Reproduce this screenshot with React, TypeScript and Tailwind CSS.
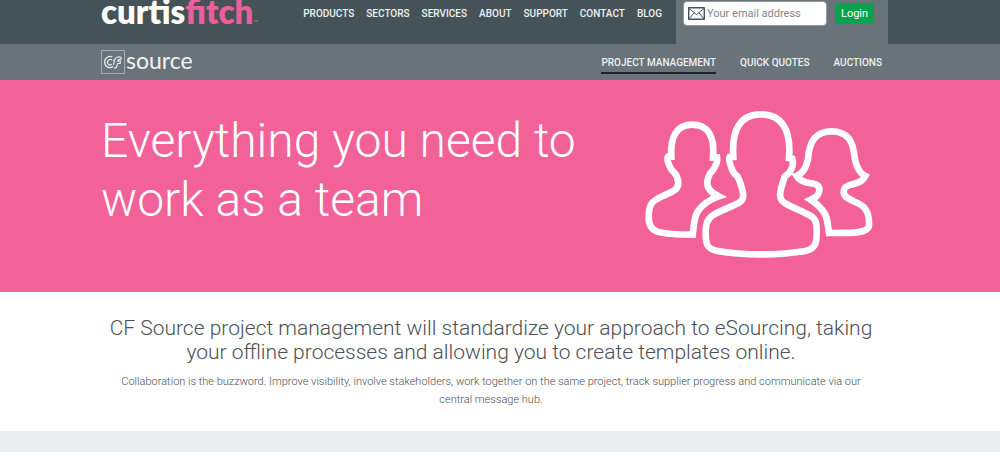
import React from 'react';

const mainLinks = ['Products', 'Sectors', 'Services', 'About', 'Support', 'Contact', 'Blog'];

const sourceLinks = [
  { label: 'Project management', active: true },
  { label: 'Quick quotes', active: false },
  { label: 'Auctions', active: false },
];

const SourceMark = () => (
  <svg viewBox="0 0 24 24" className="h-6 w-6" fill="none" stroke="#e6eaec" aria-hidden="true">
    <rect x="0.5" y="0.5" width="23" height="23" stroke="#a3abaf" />
    <path d="M11.500 7C8 5.500 3.700 7.500 3.700 12.300c0 5 5 6.700 8.500 4.200M11 9.800C9 8.800 6.500 9.800 6.500 12.300s2.500 3.400 4.300 2" strokeWidth="1.300" />
    <path d="M20.300 7.300c-3.500-1.300-6.300 0-6.800 3H12M20.300 7.300l-.6 2.200c-1.700-.4-2.700 0-3 1.700h2.800l-.5 2.300h-2.600l-.6 3c-.3 1.300-1.300 1.700-2.800 1.500M13.500 10.300l-1 4.500" strokeWidth="1.200" strokeLinejoin="round" />
  </svg>
);

const EnvelopeIcon = () => (
  <svg viewBox="0 0 17 13" className="h-[13px] w-[17px] shrink-0" fill="none" stroke="#3f5360" strokeLinejoin="round" aria-hidden="true">
    <rect x="0.7" y="0.7" width="15.600" height="11.600" strokeWidth="1.400" />
    <path d="M1 1.500l7.500 6 7.500-6M1.200 11.800l4.800-6M15.800 11.800l-4.800-6" />
  </svg>
);

const TeamIcon = () => (
  <svg
    viewBox="42 30 690 450"
    className="h-[150px] w-[230px] shrink-0"
    fill="none"
    stroke="#fff"
    strokeWidth="20"
    strokeLinejoin="miter"
    aria-hidden="true"
  >
    {/* left */}
    <path d="M188 404C150 404 112 404 82 395C62 388 56 374 56 352C56 308 70 301 98 288C128 275 145 270 145 248C144 234 139 224 132 217C123 211 120 201 116 192C112 181 111 174 114 170L124 170C120 108 142 74 187 74C233 74 255 108 249 172L261 172C263 181 260 191 255 200C250 209 246 215 240 221C234 232 230 247 233 258C237 273 252 282 266 289C240 298 220 310 204 333C191 352 192 378 188 404Z" />
    {/* centre */}
    <path d="M310 171C304 87 332 43 393 43C454 43 484 88 477 174L487 176C491 190 487 205 480 216C474 222 470 225 464 230C460 242 457 252 453 266C448 288 449 300 466 310C487 323 518 333 541 347C560 358 560 375 560 394C560 426 559 444 529 452C449 467 339 467 259 452C230 445 227 430 227 402C227 375 229 358 250 345C276 330 302 321 324 310C342 300 342 288 336 266C332 252 328 238 322 229C314 224 307 213 304 203C300 191 295 179 299 171Z" />
    {/* right */}
    <path d="M597 399C592 370 594 350 577 330C567 317 556 308 542 299C558 291 566 287 568 271C570 253 553 251 533 248C515 244 506 238 500 228C519 221 528 206 534 177C537 124 557 94 605 94C654 94 670 125 674 174C679 204 688 219 706 228C700 240 692 247 673 251C647 257 641 263 641 278C643 300 681 303 700 320C717 336 718 360 717 377C715 399 674 399 597 399Z" />
  </svg>
);

const TopBar = () => (
  <header className="bg-[#455358]">
    <div className="mx-auto flex h-11 max-w-[798px] pr-[11px]">
      <a href="#home" className="whitespace-nowrap font-['Lato',sans-serif] text-[33px] font-extrabold leading-[22px] text-white">
        curtis<span className="text-[#ef5d9a]">fitch<span className="text-[6px] font-normal">™</span></span>
      </a>
      <nav className="ml-auto mr-[14px] flex gap-3 pt-1" aria-label="Main">
        {mainLinks.map(link => (
          <a key={link} href={`#${link.toLowerCase()}`} className="text-[10px] font-medium uppercase leading-5 text-[#eef1f2]">
            {link}
          </a>
        ))}
      </nav>
      <form className="flex w-[212px] items-start gap-2 bg-[#69737a] pl-[7px] pt-px" onSubmit={e => e.preventDefault()}>
        <label className="flex h-[25px] w-[144px] items-center gap-[2px] rounded-sm border border-[#999] bg-white pl-1">
          <EnvelopeIcon />
          <input
            type="email"
            aria-label="Email address"
            placeholder="Your email address"
            className="w-full min-w-0 pt-px text-[11px] text-gray-700 outline-none placeholder:text-[#858585]"
          />
        </label>
        <button type="submit" className="mt-[2px] h-[21px] rounded-sm bg-[#0aa24f] px-[6px] text-[11px] leading-[21px] text-white">
          Login
        </button>
      </form>
    </div>
  </header>
);

const SourceBar = () => (
  <div className="bg-[#69737a]">
    <div className="mx-auto flex h-9 max-w-[798px] items-center justify-between pr-[17px]">
      <a href="#source" className="flex items-center gap-px">
        <SourceMark />
        <span className="pb-1 font-['Lato',sans-serif] text-[23px] leading-6 text-[#f1f3f4]">source</span>
      </a>
      <nav className="flex gap-6" aria-label="CF Source">
        {sourceLinks.map(({ label, active }) => (
          <a
            key={label}
            href={`#${label.replace(' ', '-').toLowerCase()}`}
            aria-current={active ? 'page' : undefined}
            className={`border-b-2 pt-1 text-[10px] font-medium uppercase leading-[18px] text-[#eef1f2] ${
              active ? 'border-[#1b252b]' : 'border-transparent'
            }`}
          >
            {label}
          </a>
        ))}
      </nav>
    </div>
  </div>
);

export default function App() {
  return (
    <div className="min-h-screen bg-[#eaeeee] font-['Roboto',sans-serif]">
      <TopBar />
      <SourceBar />
      <main>
        <section className="bg-[#f26197]">
          <div className="mx-auto flex max-w-[798px] justify-between pb-8 pr-[25px] pt-[30px]">
            <h1 className="max-w-[500px] pt-px text-[48px] font-light leading-[59px] text-white">
              Everything you need to work as a team
            </h1>
            <TeamIcon />
          </div>
        </section>
        <section className="bg-white">
          <div className="mx-auto max-w-[798px] pb-[22px] pr-[18px] pt-6 text-center">
            <h2 className="mx-auto max-w-[768px] text-[21px] font-light leading-6 text-[#4b5154]">
              CF Source project management will standardize your approach to eSourcing, taking your offline processes
              and allowing you to create templates online.
            </h2>
            <p className="mx-auto mt-[9px] max-w-[750px] text-[11px] font-light leading-[18px] text-[#4b5154]">
              Collaboration is the buzzword. Improve visibility, involve stakeholders, work together on the same
              project, track supplier progress and communicate via our central message hub.
            </p>
          </div>
        </section>
      </main>
    </div>
  );
}
